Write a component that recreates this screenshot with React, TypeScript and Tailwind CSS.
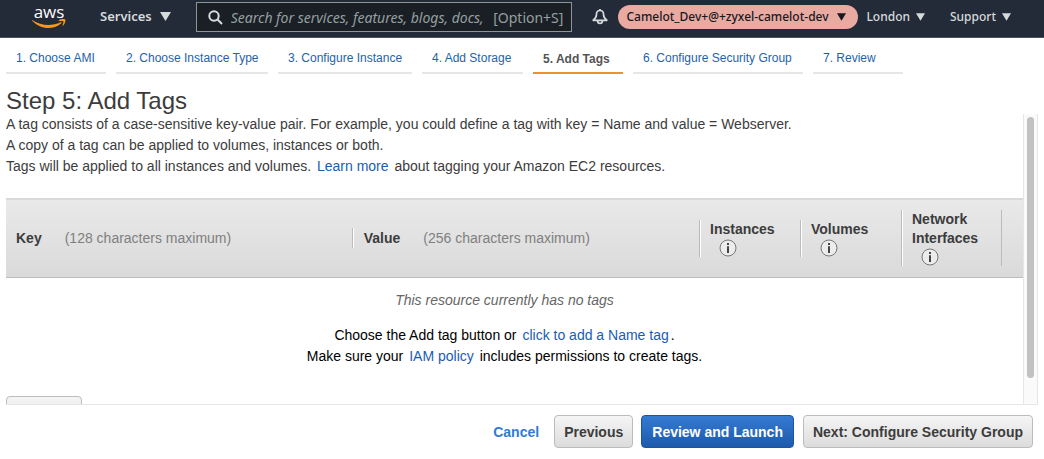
import React from "react";

function Caret({ small = false }: { small?: boolean }) {
  return (
    <svg
      viewBox="0 0 11 9"
      className={small ? "h-2 w-[9px] shrink-0" : "h-[9px] w-[11px] shrink-0"}
      fill="currentColor"
      aria-hidden="true"
    >
      <path d="M0 0h11L5.5 9z" />
    </svg>
  );
}

function AwsLogo() {
  return (
    <a href="#home" className="block w-[34px] shrink-0">
      <svg viewBox="0 0 34 24" className="h-6 w-[34px] overflow-visible">
        <text
          x="17"
          y="13"
          textAnchor="middle"
          fill="#ffffff"
          className="font-['Open_Sans',sans-serif] text-[17px] font-medium"
        >
          aws
        </text>
        <path
          d="M0.4 15.200c4.700 3.200 10.400 4.700 16 4.700 4 0 8.500-0.900 12.400-2.700 0.700-0.300 1.200 0.500 0.500 1-3.700 3.300-8.700 4.900-12.900 4.900-6.300 0-12-2.900-16.300-7.300-0.400-0.400 0-0.900 0.300-0.600z"
          fill="#f7981f"
        />
        <path
          d="M26.900 15.200c2.200-1.400 5.500-1.300 6.300-0.700 0.700 0.700-0.100 4.400-2.100 6.100-0.400 0.300-0.900 0.100-0.600-0.400 0.500-1.300 1.300-3.100 0.900-3.700-0.400-0.600-2.900-0.400-4.200-0.300-0.500 0-0.700-0.600-0.300-1z"
          fill="#f7981f"
        />
      </svg>
    </a>
  );
}

function TopBar() {
  return (
    <header className="flex h-[38px] shrink-0 items-center border-b border-[#4a515c] bg-[#232a38] pr-[33px] pb-1 pl-8 font-['Noto_Sans',sans-serif] text-[#d5dbdb]">
      <AwsLogo />
      <button className="ml-[34px] flex items-center gap-2 text-[13px] font-semibold">
        Services
        <Caret />
      </button>
      <label className="ml-[25px] flex h-[30px] min-w-0 flex-1 items-center border border-[#8d9696] bg-[#1a1f26] pt-px pr-2 pl-[11px] text-[#95a09f]">
        <svg
          viewBox="0 0 15 15"
          className="h-[15px] w-[15px] shrink-0"
          fill="none"
          stroke="#d5dbdb"
          strokeWidth="2"
          aria-hidden="true"
        >
          <circle cx="6" cy="6" r="4.700" />
          <path d="M9.300 9.300L14 14" />
        </svg>
        <input
          type="text"
          aria-label="Search"
          placeholder="Search for services, features, blogs, docs,"
          className="ml-2 min-w-0 flex-1 bg-transparent text-[14px] italic outline-none placeholder:text-[#95a09f]"
        />
        <span className="text-[14px]">[Option+S]</span>
      </label>
      <button aria-label="Notifications" className="ml-5 shrink-0">
        <svg
          viewBox="0 0 16 16"
          className="h-4 w-4"
          fill="none"
          stroke="#d5dbdb"
          strokeWidth="1.700"
          strokeLinejoin="round"
        >
          <path d="M8 1.500c-2.300 0-3.500 1.600-3.500 3.700 0 2.600-0.900 4.300-3.300 6.100h13.600c-2.400-1.800-3.300-3.500-3.300-6.100 0-2.100-1.200-3.700-3.500-3.700z" />
          <path d="M8 0v1.500M5.600 11.500c0 1.800 0.900 3 2.400 3s2.400-1.200 2.400-3" />
        </svg>
      </button>
      <button className="ml-[10px] flex h-6 w-60 shrink-0 items-center gap-2 rounded-full bg-[#e9aaa1] pl-2 text-[12px] font-medium text-[#16191f]">
        Camelot_Dev+@+zyxel-camelot-dev
        <Caret small />
      </button>
      <button className="ml-2 flex shrink-0 items-center gap-[6px] text-[12px] font-medium">
        London
        <Caret small />
      </button>
      <button className="ml-[25px] flex shrink-0 items-center gap-[6px] text-[12px] font-medium">
        Support
        <Caret small />
      </button>
    </header>
  );
}

const steps = [
  { label: "1. Choose AMI", width: "w-[100px]" },
  { label: "2. Choose Instance Type", width: "w-[152px]" },
  { label: "3. Configure Instance", width: "w-[134px]" },
  { label: "4. Add Storage", width: "w-[101px]" },
  { label: "5. Add Tags", width: "w-[90px]", current: true },
  { label: "6. Configure Security Group", width: "w-[170px]" },
  { label: "7. Review", width: "w-[90px]" },
];

function Steps() {
  return (
    <nav className="px-[6px]">
      <ol className="flex gap-[10px] text-[12px]">
        {steps.map((s) => (
          <li
            key={s.label}
            className={`flex h-9 shrink-0 items-center border-b-2 pl-[10px] whitespace-nowrap ${s.width} ${
              s.current ? "border-[#ec912d]" : "border-[#e6e6e6]"
            }`}
          >
            {s.current ? (
              <span aria-current="step" className="pt-2 font-bold text-[#545454]">
                {s.label}
              </span>
            ) : (
              <a href="#step" className="pt-[6px] text-[#1f62a8]">
                {s.label}
              </a>
            )}
          </li>
        ))}
      </ol>
    </nav>
  );
}

function InfoIcon() {
  return (
    <svg viewBox="0 0 18 18" className="ml-[9px] block h-[18px] w-[18px]" aria-hidden="true">
      <circle cx="9" cy="9" r="8" fill="#ececec" stroke="#777777" />
      <path d="M8 4h2v2H8zM8 7.300h2V14H8z" fill="#444444" />
    </svg>
  );
}

function TextHeading({ title, note, divided }: { title: string; note: string; divided?: boolean }) {
  return (
    <th scope="col" className="p-0 text-left align-middle">
      <div
        className={
          divided
            ? "flex h-5 items-center border-l border-[#bbbbbb] pl-[11px] shadow-[inset_1px_0_0_#ffffff]"
            : "flex h-5 items-center pl-[10px]"
        }
      >
        <span>{title}</span>
        <span className="ml-[23px] font-normal text-[#7f7f7f]">{note}</span>
      </div>
    </th>
  );
}

function FlagHeading({ title }: { title: string }) {
  return (
    <th scope="col" className="p-0 text-left align-middle">
      <div className="border-l border-[#bbbbbb] pl-[10px] leading-[19px] shadow-[inset_1px_0_0_#ffffff]">
        {title}
        <InfoIcon />
      </div>
    </th>
  );
}

function TagTable() {
  return (
    <table className="mt-[21px] w-full table-fixed border-collapse text-[14px] text-[#3c3c3c]">
      <colgroup>
        <col className="w-[34%]" />
        <col />
        <col className="w-[101px]" />
        <col className="w-[101px]" />
        <col className="w-[100px]" />
        <col className="w-[22px]" />
      </colgroup>
      <thead>
        <tr className="h-[79px] border-t border-b border-t-[#d8d8d8] border-b-[#bcbcbc] bg-linear-to-b from-[#e9e9e9] to-[#dadada]">
          <TextHeading title="Key" note="(128 characters maximum)" />
          <TextHeading title="Value" note="(256 characters maximum)" divided />
          <FlagHeading title="Instances" />
          <FlagHeading title="Volumes" />
          <FlagHeading title="Network Interfaces" />
          <td className="p-0 align-middle">
            <div className="h-14 border-l border-[#bbbbbb]" />
          </td>
        </tr>
      </thead>
      <tbody>
        <tr>
          <td colSpan={6} className="pt-3 pr-5 text-center leading-[21px] text-black">
            <p className="text-[#666666] italic">This resource currently has no tags</p>
            <p className="mt-[14px]">
              Choose the Add tag button or{" "}
              <a href="#name-tag" className="mx-[2px] text-[#1a5cb3]">
                click to add a Name tag
              </a>
              .
            </p>
            <p>
              Make sure your{" "}
              <a href="#iam" className="mx-[2px] text-[#1a5cb3]">
                IAM policy
              </a>{" "}
              includes permissions to create tags.
            </p>
          </td>
        </tr>
      </tbody>
    </table>
  );
}

const greyButton =
  "h-[33px] rounded border border-[#bcbcbc] bg-linear-to-b from-[#f5f5f5] to-[#dcdcdc] px-[9px] pt-[2px] text-[#3c3c3c]";

export default function App() {
  return (
    <div className="flex h-screen flex-col bg-white font-['Liberation_Sans',Arial,sans-serif] text-[14px] text-[#3c3c3c]">
      <TopBar />
      <Steps />
      <main className="flex min-h-0 flex-1 flex-col px-[6px]">
        <h1 className="mt-[13px] text-[24px] leading-[27px]">Step 5: Add Tags</h1>
        <div className="flex min-h-0 flex-1 border-b border-[#e6e6e6]">
          <div className="min-w-0 flex-1 overflow-hidden leading-[21px]">
            <p>
              A tag consists of a case-sensitive key-value pair. For example, you could define a tag
              with key = Name and value = Webserver.
            </p>
            <p>A copy of a tag can be applied to volumes, instances or both.</p>
            <p>
              Tags will be applied to all instances and volumes.{" "}
              <a href="#learn" className="mx-[2px] text-[#1a5cb3]">
                Learn more
              </a>{" "}
              about tagging your Amazon EC2 resources.
            </p>
            <TagTable />
            <button
              aria-label="Add Tag"
              className="mt-[29px] block h-[33px] w-[76px] rounded border border-[#bcbcbc] bg-linear-to-b from-[#f5f5f5] to-[#dcdcdc]"
            />
          </div>
          <div className="w-[15px] shrink-0 border-r border-l border-[#e6e6e6] bg-[#fafafa] px-[3px] pt-[3px]">
            <div className="h-[261px] rounded-full bg-[#c1c1c1]" />
          </div>
        </div>
      </main>
      <footer className="flex h-[54px] shrink-0 items-center justify-end pr-[11px] pb-[2px] font-bold">
        <button className="mr-[15px] pt-[2px] text-[#2f7bd6]">Cancel</button>
        <button className={`${greyButton} mr-2`}>Previous</button>
        <button className="mr-[9px] h-[33px] rounded border border-[#1b54a3] bg-linear-to-b from-[#357bd2] to-[#1c5aac] px-[10px] pt-[2px] text-white">
          Review and Launch
        </button>
        <button className={greyButton}>Next: Configure Security Group</button>
      </footer>
    </div>
  );
}
